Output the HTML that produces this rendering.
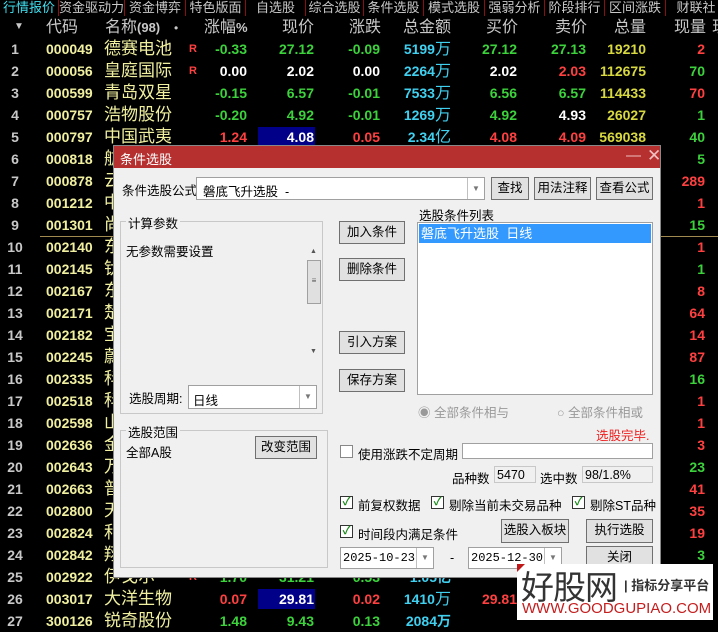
<!DOCTYPE html><html><head><meta charset="utf-8"><style>
*{margin:0;padding:0;box-sizing:border-box}
body{width:718px;height:620px;background:#000;overflow:hidden;position:relative;font-family:"Liberation Sans","Noto Sans CJK SC",sans-serif}
.a{position:absolute;white-space:nowrap}
.tab{position:absolute;top:0;height:16px;font-size:13px;line-height:15px;color:#c8c8c8;border-right:1px solid #8a1010;text-align:center}
.r{position:absolute;height:22px;left:0;width:718px;font-size:14px;line-height:22px;font-weight:bold}
.r span{position:absolute;white-space:nowrap}
.n{left:4px;width:22px;color:#c8c8c8;font-weight:bold;text-align:center}
.c{left:46px;color:#f0f0a0}
.nm{left:104px;color:#f0f0a0;font-weight:normal;font-size:17px}
.R{left:189px;color:#ff4040;font-size:11px}
.g{color:#3cd23c}.d{color:#ff4040}.w{color:#fff}.y{color:#d8d840}.cy{color:#40d0f0}
.c1{right:471px}.c2{right:404px}.c3{right:338px}.c4{right:267px}.c5{right:201px}.c6{right:132px}.c7{right:72px}.c8{right:13px}
.hd{position:absolute;top:18px;font-size:16px;color:#c8c8c8;line-height:20px}
.u{font-style:normal;font-weight:normal;font-size:16px}
.dlg{position:absolute;left:113px;top:145px;width:548px;height:433px;background:#f0f0f0;border:1px solid #888;font-size:12.5px;color:#000}
.dlg .a{font-size:12.5px}
.btn{position:absolute;background:#e1e1e1;border:1px solid #707070;text-align:center;font-size:12.5px;line-height:21px}
.box{position:absolute;background:#fff;border:1px solid #a0a0a0}
.dd{position:absolute;right:0;top:0;bottom:0;width:17px;border-left:1px solid #c0c0c0;background:#fff;font-size:8px;color:#777;text-align:center}
.cb{position:absolute;width:13px;height:13px;border:1px solid #333;background:#fff;font-size:11px;line-height:11px;color:#1a8a1a;text-align:center;font-weight:bold}
.gb{position:absolute;border:1px solid #c8c8c8}
</style></head><body>
<div class="tab" style="left:0;width:59px;color:#40e0f0">行情报价</div>
<div class="tab" style="left:59px;width:66px">资金驱动力</div>
<div class="tab" style="left:125px;width:61px">资金博弈</div>
<div class="tab" style="left:186px;width:60px">特色版面</div>
<div class="tab" style="left:246px;width:60px">自选股</div>
<div class="tab" style="left:306px;width:58px">综合选股</div>
<div class="tab" style="left:364px;width:60px">条件选股</div>
<div class="tab" style="left:424px;width:61px">模式选股</div>
<div class="tab" style="left:485px;width:60px">强弱分析</div>
<div class="tab" style="left:545px;width:60px">阶段排行</div>
<div class="tab" style="left:605px;width:61px">区间涨跌</div>
<div class="tab" style="left:666px;width:60px;border:none">财联社</div>
<div class="a" style="left:14px;top:21px;color:#c8c8c8;font-size:10px">▼</div>
<div class="hd" style="left:46px">代码</div>
<div class="hd" style="left:105px">名称<b style="font-size:13px">(98)</b></div>
<div class="hd" style="left:174px;font-size:12px">•</div>
<div class="hd" style="left:204px">涨幅<b style="font-size:13px">%</b></div>
<div class="hd" style="left:282px">现价</div>
<div class="hd" style="left:349px">涨跌</div>
<div class="hd" style="left:403px">总金额</div>
<div class="hd" style="left:486px">买价</div>
<div class="hd" style="left:555px">卖价</div>
<div class="hd" style="left:614px">总量</div>
<div class="hd" style="left:674px">现量</div>
<div class="hd" style="left:712px">现</div>

<div class="r" style="top:38px"><span class="n">1</span><span class="c">000049</span><span class="nm">德赛电池</span><span class="R">R</span><span class="c1 g">-0.33</span><span class="c2 g">27.12</span><span class="c3 g">-0.09</span><span class="c4 cy">5199<i class="u">万</i></span><span class="c5 g">27.12</span><span class="c6 g">27.13</span><span class="c7 y">19210</span><span class="c8 d">2</span></div>
<div class="r" style="top:60px"><span class="n">2</span><span class="c">000056</span><span class="nm">皇庭国际</span><span class="R">R</span><span class="c1 w">0.00</span><span class="c2 w">2.02</span><span class="c3 w">0.00</span><span class="c4 cy">2264<i class="u">万</i></span><span class="c5 w">2.02</span><span class="c6 d">2.03</span><span class="c7 y">112675</span><span class="c8 g">70</span></div>
<div class="r" style="top:82px"><span class="n">3</span><span class="c">000599</span><span class="nm">青岛双星</span><span class="c1 g">-0.15</span><span class="c2 g">6.57</span><span class="c3 g">-0.01</span><span class="c4 cy">7533<i class="u">万</i></span><span class="c5 g">6.56</span><span class="c6 g">6.57</span><span class="c7 y">114433</span><span class="c8 d">70</span></div>
<div class="r" style="top:104px"><span class="n">4</span><span class="c">000757</span><span class="nm">浩物股份</span><span class="c1 g">-0.20</span><span class="c2 g">4.92</span><span class="c3 g">-0.01</span><span class="c4 cy">1269<i class="u">万</i></span><span class="c5 g">4.92</span><span class="c6 w">4.93</span><span class="c7 y">26027</span><span class="c8 g">1</span></div>
<div class="a" style="left:258px;top:127px;width:57px;height:20px;background:#000088"></div>
<div class="r" style="top:126px"><span class="n">5</span><span class="c">000797</span><span class="nm">中国武夷</span><span class="c1 d">1.24</span><span class="c2 w">4.08</span><span class="c3 d">0.05</span><span class="c4 cy">2.34<i class="u">亿</i></span><span class="c5 d">4.08</span><span class="c6 d">4.09</span><span class="c7 y">569038</span><span class="c8 g">40</span></div>
<div class="r" style="top:148px"><span class="n">6</span><span class="c">000818</span><span class="nm">航</span><span class="c8 g">5</span></div>
<div class="r" style="top:170px"><span class="n">7</span><span class="c">000878</span><span class="nm">云</span><span class="c8 d">289</span></div>
<div class="r" style="top:192px"><span class="n">8</span><span class="c">001212</span><span class="nm">中</span><span class="c8 d">1</span></div>
<div class="r" style="top:214px"><span class="n">9</span><span class="c">001301</span><span class="nm">尚</span><span class="c8 g">15</span></div>
<div class="a" style="left:40px;top:236px;width:678px;height:1px;background:#a08a50"></div>
<div class="r" style="top:236px"><span class="n">10</span><span class="c">002140</span><span class="nm">东</span><span class="c8 d">1</span></div>
<div class="r" style="top:258px"><span class="n">11</span><span class="c">002145</span><span class="nm">钛</span><span class="c8 g">1</span></div>
<div class="r" style="top:280px"><span class="n">12</span><span class="c">002167</span><span class="nm">东</span><span class="c8 d">8</span></div>
<div class="r" style="top:302px"><span class="n">13</span><span class="c">002171</span><span class="nm">楚</span><span class="c8 d">64</span></div>
<div class="r" style="top:324px"><span class="n">14</span><span class="c">002182</span><span class="nm">宝</span><span class="c8 d">14</span></div>
<div class="r" style="top:346px"><span class="n">15</span><span class="c">002245</span><span class="nm">蔚</span><span class="c8 d">87</span></div>
<div class="r" style="top:368px"><span class="n">16</span><span class="c">002335</span><span class="nm">科</span><span class="c8 g">16</span></div>
<div class="r" style="top:390px"><span class="n">17</span><span class="c">002518</span><span class="nm">科</span><span class="c8 d">1</span></div>
<div class="r" style="top:412px"><span class="n">18</span><span class="c">002598</span><span class="nm">山</span><span class="c8 d">1</span></div>
<div class="r" style="top:434px"><span class="n">19</span><span class="c">002636</span><span class="nm">金</span><span class="c8 d">3</span></div>
<div class="r" style="top:456px"><span class="n">20</span><span class="c">002643</span><span class="nm">万</span><span class="c8 g">23</span></div>
<div class="r" style="top:478px"><span class="n">21</span><span class="c">002663</span><span class="nm">普</span><span class="c8 d">41</span></div>
<div class="r" style="top:500px"><span class="n">22</span><span class="c">002800</span><span class="nm">天</span><span class="c8 d">35</span></div>
<div class="r" style="top:522px"><span class="n">23</span><span class="c">002824</span><span class="nm">和</span><span class="c8 d">19</span></div>
<div class="r" style="top:544px"><span class="n">24</span><span class="c">002842</span><span class="nm">翔</span><span class="c8 g">3</span></div>
<div class="r" style="top:566px"><span class="n">25</span><span class="c">002922</span><span class="nm">伊戈尔</span><span class="R">R</span><span class="c1 g">1.70</span><span class="c2 g">31.21</span><span class="c3 g">0.53</span><span class="c4 cy">1.05亿</span></div>
<div class="a" style="left:258px;top:589px;width:57px;height:20px;background:#000088"></div>
<div class="r" style="top:588px"><span class="n">26</span><span class="c">003017</span><span class="nm">大洋生物</span><span class="c1 d">0.07</span><span class="c2 w">29.81</span><span class="c3 d">0.02</span><span class="c4 cy">1410<i class="u">万</i></span><span class="c5 d">29.81</span></div>
<div class="r" style="top:610px"><span class="n">27</span><span class="c">300126</span><span class="nm">锐奇股份</span><span class="c1 g">1.48</span><span class="c2 g">9.43</span><span class="c3 g">0.13</span><span class="c4 cy">2084万</span></div>

<div class="dlg">
<div class="a" style="left:0;top:0;width:546px;height:22px;background:#b5302f"></div>
<div class="a" style="left:6px;top:3px;color:#fff;font-size:13px">条件选股</div>
<div class="a" style="left:512px;top:1px;color:#f0c0c0;font-size:15px">—</div>
<div class="a" style="left:533px;top:0;color:#f0c0c0;font-size:17px">✕</div>
<div class="a" style="left:8px;top:34px">条件选股公式</div>
<div class="box" style="left:82px;top:31px;width:289px;height:23px"><span class="a" style="left:6px;top:3px">磐底飞升选股 &nbsp;-</span><div class="dd" style="line-height:21px">▼</div></div>
<div class="btn" style="left:377px;top:31px;width:38px">查找</div>
<div class="btn" style="left:420px;top:31px;width:57px">用法注释</div>
<div class="btn" style="left:482px;top:31px;width:57px">查看公式</div>
<div class="gb" style="left:6px;top:75px;width:203px;height:193px"></div>
<div class="a" style="left:12px;top:67px;background:#f0f0f0;padding:0 2px">计算参数</div>
<div class="a" style="left:12px;top:95px">无参数需要设置</div>
<div class="a" style="left:192px;top:102px;width:16px;height:112px;background:#f0f0f0"><div class="a" style="left:4px;top:0;font-size:7px;color:#555">▲</div><div class="a" style="left:1px;top:12px;width:14px;height:44px;background:#e0e0e0;border:1px solid #a0a0a0;font-size:8px;text-align:center;line-height:40px;color:#555">≡</div><div class="a" style="left:4px;top:100px;font-size:7px;color:#555">▼</div></div>
<div class="a" style="left:15px;top:242px">选股周期:</div>
<div class="box" style="left:74px;top:239px;width:129px;height:24px"><span class="a" style="left:4px;top:4px">日线</span><div class="dd" style="line-height:22px">▼</div></div>
<div class="gb" style="left:6px;top:284px;width:208px;height:138px"></div>
<div class="a" style="left:12px;top:276px;background:#f0f0f0;padding:0 2px">选股范围</div>
<div class="a" style="left:12px;top:296px">全部A股</div>
<div class="btn" style="left:141px;top:290px;width:62px;height:23px">改变范围</div>
<div class="btn" style="left:225px;top:75px;width:66px;height:23px">加入条件</div>
<div class="btn" style="left:225px;top:112px;width:66px;height:23px">删除条件</div>
<div class="btn" style="left:225px;top:185px;width:66px;height:23px">引入方案</div>
<div class="btn" style="left:225px;top:223px;width:66px;height:23px">保存方案</div>
<div class="a" style="left:305px;top:59px">选股条件列表</div>
<div class="box" style="left:303px;top:76px;width:236px;height:173px"><div class="a" style="left:1px;top:1px;width:232px;height:19px;background:#3399ff;color:#fff;padding-left:2px;font-size:13px;line-height:19px">磐底飞升选股 &nbsp;日线</div></div>
<div class="a" style="left:304px;top:256px;color:#999">◉ 全部条件相与</div>
<div class="a" style="left:443px;top:256px;color:#999">○ 全部条件相或</div>
<div class="a" style="left:482px;top:279px;color:#ee2020">选股完毕.</div>
<div class="cb" style="left:226px;top:299px;border-color:#888"></div>
<div class="a" style="left:244px;top:298px">使用涨跌不定周期</div>
<div class="box" style="left:348px;top:297px;width:191px;height:16px"></div>
<div class="a" style="left:338px;top:322px">品种数</div>
<div class="box" style="left:380px;top:320px;width:42px;height:17px;background:#f0f0f0;border-color:#c8c8c8"><span class="a" style="left:2px;top:1px">5470</span></div>
<div class="a" style="left:426px;top:322px">选中数</div>
<div class="box" style="left:468px;top:320px;width:71px;height:17px;background:#f0f0f0;border-color:#c8c8c8"><span class="a" style="left:2px;top:1px">98/1.8%</span></div>
<div class="cb" style="left:226px;top:350px">✓</div><div class="a" style="left:244px;top:349px">前复权数据</div>
<div class="cb" style="left:317px;top:350px">✓</div><div class="a" style="left:335px;top:349px">剔除当前未交易品种</div>
<div class="cb" style="left:458px;top:350px">✓</div><div class="a" style="left:476px;top:349px">剔除ST品种</div>
<div class="cb" style="left:226px;top:379px">✓</div><div class="a" style="left:244px;top:378px">时间段内满足条件</div>
<div class="btn" style="left:387px;top:373px;width:68px;height:24px">选股入板块</div>
<div class="btn" style="left:472px;top:373px;width:67px;height:24px">执行选股</div>
<div class="box" style="left:226px;top:401px;width:94px;height:22px"><span class="a" style="left:2px;top:3px;font-family:'Liberation Mono',monospace;font-size:12px">2025-10-23</span><div class="dd" style="line-height:20px">▼</div></div>
<div class="a" style="left:336px;top:405px">-</div>
<div class="box" style="left:354px;top:401px;width:94px;height:22px"><span class="a" style="left:2px;top:3px;font-family:'Liberation Mono',monospace;font-size:12px">2025-12-30</span><div class="dd" style="line-height:20px">▼</div></div>
<div class="btn" style="left:472px;top:400px;width:67px;height:22px">关闭</div>
</div>

<div class="a" style="left:517px;top:564px;width:196px;height:56px;background:#fff"></div>
<div class="a" style="left:517px;top:564px;width:0;height:0;border-top:8px solid #c01818;border-right:8px solid transparent"></div>
<div class="a" style="left:521px;top:561px;font-size:33px;color:#333;letter-spacing:-1px">好股网</div>
<div class="a" style="left:624px;top:575px;font-size:13px;color:#333;font-weight:bold">| 指标分享平台</div>
<div class="a" style="left:522px;top:600px;font-size:15px;color:#c41e1e;letter-spacing:0">WWW.GOODGUPIAO.COM</div>
</body></html>
